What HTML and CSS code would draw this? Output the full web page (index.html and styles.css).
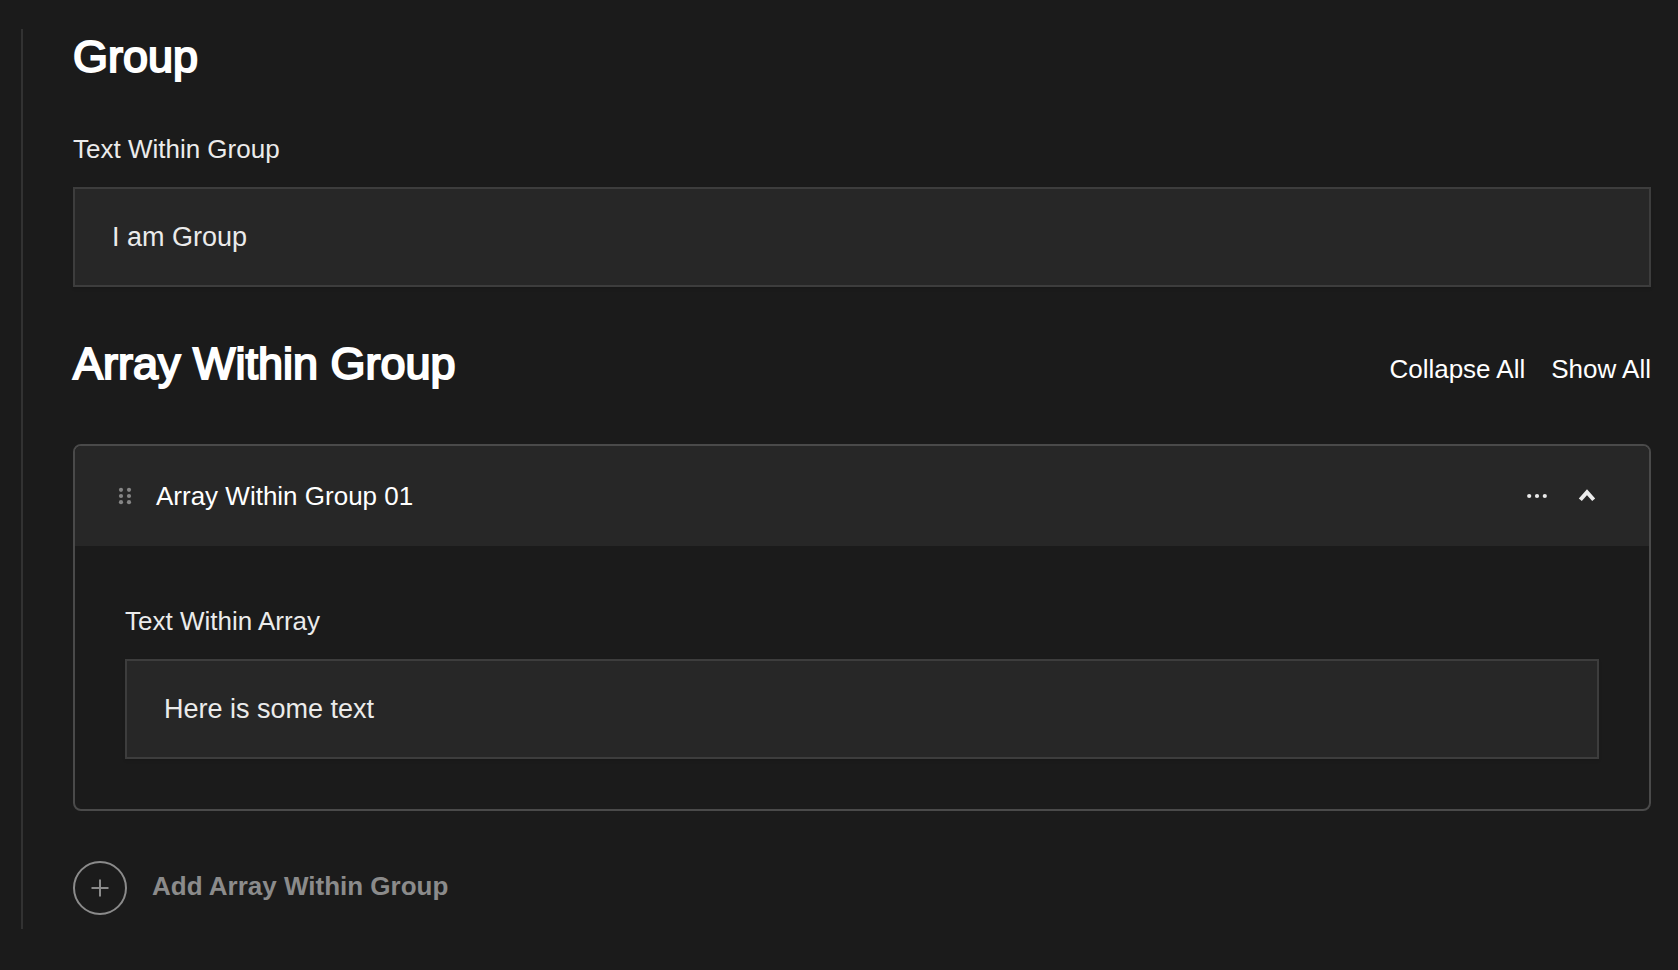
FILE: index.html
```html
<!DOCTYPE html>
<html lang="en">
<head>
<meta charset="utf-8">
<title>Group</title>
<link rel="stylesheet" href="styles.css">
</head>
<body>
<main class="group">
  <h2 class="heading">Group</h2>
  <div class="field field-group">
    <label class="label" for="group-text">Text Within Group</label>
    <input class="input" id="group-text" type="text" value="I am Group">
  </div>
  <section class="array">
    <header class="array-header">
      <h2 class="heading">Array Within Group</h2>
      <div class="actions">
        <button class="link-button" type="button">Collapse All</button>
        <button class="link-button" type="button">Show All</button>
      </div>
    </header>
    <article class="row">
      <header class="row-header">
        <button class="icon-button" type="button" aria-label="Drag to reorder">
          <svg class="drag-icon" width="14" height="18" viewBox="0 0 14 18" fill="currentColor">
            <circle cx="3" cy="2.8" r="2.1"/><circle cx="11" cy="2.8" r="2.1"/>
            <circle cx="3" cy="9" r="2.1"/><circle cx="11" cy="9" r="2.1"/>
            <circle cx="3" cy="15.2" r="2.1"/><circle cx="11" cy="15.2" r="2.1"/>
          </svg>
        </button>
        <h3 class="row-title">Array Within Group 01</h3>
        <div class="row-controls">
          <button class="icon-button" type="button" aria-label="Row actions">
            <svg width="20" height="20" viewBox="0 0 20 20" fill="currentColor">
              <circle cx="2.2" cy="10" r="2.1"/><circle cx="10" cy="10" r="2.1"/><circle cx="17.8" cy="10" r="2.1"/>
            </svg>
          </button>
          <button class="icon-button" type="button" aria-label="Collapse row">
            <svg width="20" height="20" viewBox="0 0 20 20" fill="none" stroke="currentColor" stroke-width="4">
              <path d="M3.3 13.8 10 6.2l6.7 7.6"/>
            </svg>
          </button>
        </div>
      </header>
      <div class="row-body">
        <div class="field">
          <label class="label" for="array-text">Text Within Array</label>
          <input class="input" id="array-text" type="text" value="Here is some text">
        </div>
      </div>
    </article>
    <button class="add-button" type="button">
      <span class="add-icon">
        <svg width="18" height="18" viewBox="0 0 18 18" fill="none" stroke="currentColor" stroke-width="2">
          <path d="M9 0.5v17M0.5 9h17"/>
        </svg>
      </span>
      <span class="add-label">Add Array Within Group</span>
    </button>
  </section>
</main>
</body>
</html>
```
FILE: styles.css
```css
* {
  box-sizing: border-box;
}

body {
  margin: 0;
  padding: 29px 27px 41px 21px;
  background: #1b1b1b;
  color: #ebebeb;
  font: 26px/30px "Liberation Sans", Arial, sans-serif;
}

button {
  padding: 0;
  border: 0;
  background: none;
  color: inherit;
  font: inherit;
}

.group {
  padding: 0 0 14px 50px;
  border-left: 2px solid #323232;
}

.heading {
  margin: 0;
  color: #fff;
  font-size: 45px;
  font-weight: 400;
  line-height: 56px;
  -webkit-text-stroke: 2px #fff;
}

.field {
  display: flex;
  flex-direction: column;
  gap: 23px;
}

.field-group {
  margin: 49px 0;
}

.input {
  width: 100%;
  height: 100px;
  padding: 0 37px;
  border: 2px solid #3d3d3d;
  border-radius: 0;
  outline: 0;
  background: #272727;
  box-shadow: 0 2px 3px rgba(0, 0, 0, 0.1);
  color: #ebebeb;
  font: inherit;
  font-size: 27px;
}

.array-header {
  display: flex;
  align-items: flex-end;
  justify-content: space-between;
  margin-bottom: 52px;
}

.actions {
  display: flex;
  gap: 26px;
  padding-bottom: 8px;
  color: #fff;
}

.row {
  overflow: hidden;
  border: 2px solid #4a4a4a;
  border-radius: 8px;
}

.row-header {
  display: flex;
  align-items: center;
  height: 100px;
  padding: 0 52px 0 43px;
  background: #272727;
}

.icon-button {
  display: flex;
}

.drag-icon {
  color: #858585;
}

.row-title {
  flex: 1;
  margin: 0 0 0 24px;
  color: #fff;
  font-size: 26px;
  font-weight: 400;
}

.row-controls {
  display: flex;
  gap: 30px;
}

.row-body {
  padding: 60px 50px 50px;
}

.add-button {
  display: flex;
  align-items: center;
  gap: 25px;
  margin-top: 50px;
  color: #8b8b8b;
  font-weight: 700;
}

.add-icon {
  display: grid;
  place-items: center;
  width: 54px;
  height: 54px;
  border: 2px solid currentColor;
  border-radius: 50%;
}

.add-label {
  padding-bottom: 4px;
}
```
